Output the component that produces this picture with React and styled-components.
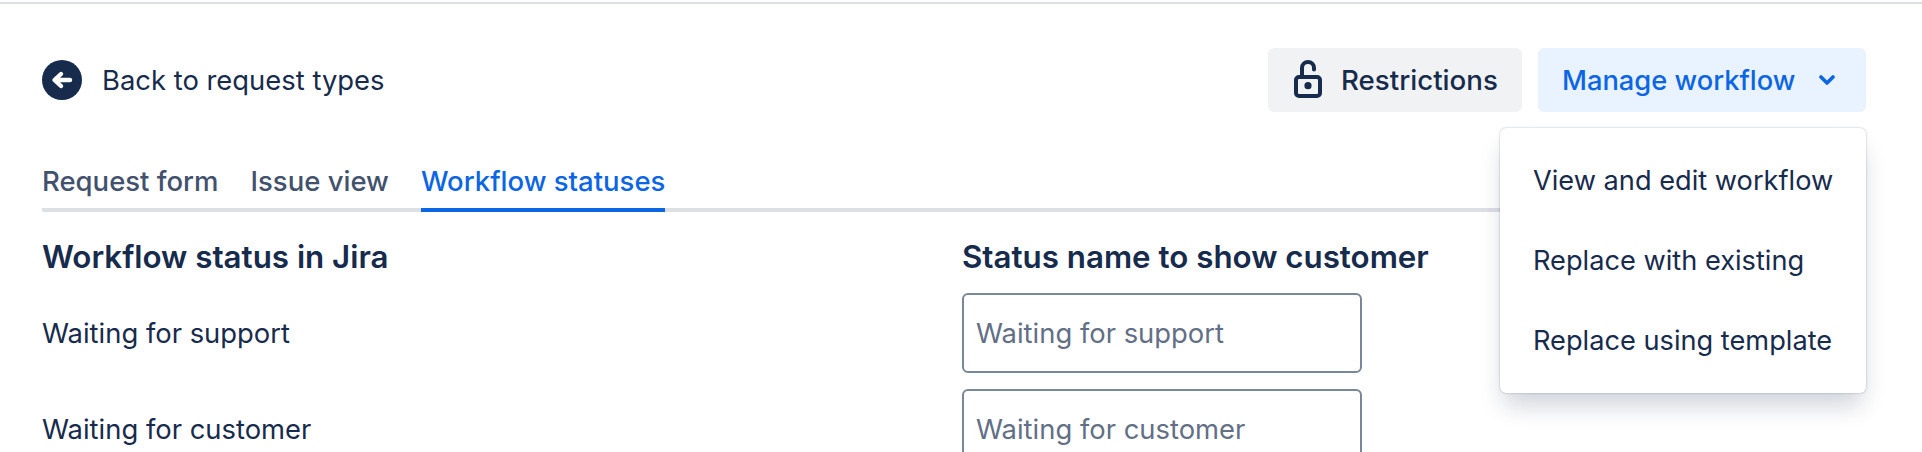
import React from 'react';
import styled, { createGlobalStyle } from 'styled-components';

const GlobalStyle = createGlobalStyle`
  html, body {
    margin: 0;
    background: #fff;
    overflow: hidden;
  }
  body {
    font-family: Inter, "Noto Sans", sans-serif;
    color: #172b4d;
  }
`;

const Page = styled.div`
  position: relative;
  height: 452px;
  padding: 2px 56px 0 42px;
  box-sizing: border-box;
  overflow: hidden;
`;

const TopRule = styled.div`
  height: 2px;
  margin: 0 -56px 0 -42px;
  background: #dcdfe4;
`;

const Header = styled.div`
  display: flex;
  align-items: center;
  justify-content: space-between;
  margin-top: 44px;
  height: 64px;
`;

const BackLink = styled.a`
  display: flex;
  align-items: center;
  gap: 20px;
  font-size: 27.4px;
  color: #172b4d;
`;

const Actions = styled.div`
  display: flex;
  gap: 16px;
`;

const Button = styled.button`
  display: flex;
  align-items: center;
  height: 64px;
  border: 0;
  border-radius: 6px;
  font: 500 ${(p) => p.$size}px Inter, sans-serif;
  background: ${(p) => (p.$primary ? '#e9f2ff' : '#f1f2f4')};
  color: ${(p) => (p.$primary ? '#0c66e4' : '#172b4d')};
  width: ${(p) => p.$width}px;
  padding: 0 0 0 ${(p) => p.$pad}px;
  gap: ${(p) => p.$gap}px;
`;

const Tabs = styled.div`
  display: flex;
  gap: 32px;
  margin-top: 48px;
  border-bottom: 4px solid #dcdfe4;
  border-radius: 2px;
`;

const Tab = styled.div`
  font-size: 27.5px;
  font-weight: 500;
  line-height: 43px;
  padding-bottom: 5px;
  margin-bottom: -4px;
  border-bottom: 4px solid ${(p) => (p.$active ? '#0c66e4' : 'transparent')};
  color: ${(p) => (p.$active ? '#0c66e4' : '#42526e')};
`;

const StatusGrid = styled.div`
  display: grid;
  grid-template-columns: 920px 1fr;
  grid-auto-rows: 80px;
  row-gap: 16px;
  align-items: center;
`;

const HeadCell = styled.div`
  font-size: 31.3px;
  font-weight: 600;
  line-height: 32px;
  margin: 29px 0 -12px;
`;

const StatusHead = styled(StatusGrid)`
  grid-auto-rows: auto;
`;

const StatusBody = styled(StatusGrid)`
  margin-top: 32px;
`;

const StatusCell = styled.div`
  font-size: 27.4px;
`;

const NameInput = styled.input`
  box-sizing: border-box;
  width: 400px;
  height: 80px;
  padding: 0 12px;
  border: 2px solid #7a869a;
  border-radius: 6px;
  font: 27.4px Inter, sans-serif;
  color: #172b4d;
  outline: none;
  &::placeholder {
    color: #626f86;
    opacity: 1;
  }
`;

const Menu = styled.div`
  position: absolute;
  top: 128px;
  left: 1500px;
  width: 366px;
  height: 265px;
  box-sizing: border-box;
  padding: 13px 0 0;
  background: #fff;
  border-radius: 6px;
  box-shadow: 0 16px 24px -4px rgba(9, 30, 66, 0.2), 0 0 2px rgba(9, 30, 66, 0.35);
`;

const MenuItem = styled.div`
  height: 80px;
  line-height: 80px;
  padding-left: 33px;
  font-size: 27.2px;
  white-space: nowrap;
`;

const BackIcon = () => (
  <svg width="40" height="40" viewBox="0 0 40 40">
    <circle cx="20" cy="20" r="20" fill="#172b4d" />
    <path d="M28 20H13M19 14l-6.5 6 6.5 6" fill="none" stroke="#fff" strokeWidth="4.4" strokeLinecap="round" strokeLinejoin="round" />
  </svg>
);

const UnlockIcon = () => (
  <svg width="28" height="40" viewBox="0 0 28 40">
    <path d="M8 17V8a6 6 0 0 1 12 0v1.5" fill="none" stroke="#172b4d" strokeWidth="4" strokeLinecap="round" />
    <rect x="2" y="17" width="24" height="19" rx="3" fill="none" stroke="#172b4d" strokeWidth="4" />
    <circle cx="14" cy="25.7" r="3.6" fill="#172b4d" />
  </svg>
);

const ChevronIcon = () => (
  <svg width="16" height="10" viewBox="0 0 16 10">
    <path d="M2 2l6 6 6-6" fill="none" stroke="#0c66e4" strokeWidth="3.6" strokeLinecap="round" strokeLinejoin="round" />
  </svg>
);

const statuses = ['Waiting for support', 'Waiting for customer'];

const App = () => (
  <Page>
    <GlobalStyle />
    <TopRule />
    <Header>
      <BackLink>
        <BackIcon />
        Back to request types
      </BackLink>
      <Actions>
        <Button $size={27.7} $width={254} $pad={26} $gap={19}>
          <UnlockIcon />
          Restrictions
        </Button>
        <Button $primary $size={27.3} $width={328} $pad={24} $gap={24}>
          Manage workflow
          <ChevronIcon />
        </Button>
      </Actions>
    </Header>
    <Tabs>
      <Tab>Request form</Tab>
      <Tab>Issue view</Tab>
      <Tab $active>Workflow statuses</Tab>
    </Tabs>
    <StatusHead>
      <HeadCell>Workflow status in Jira</HeadCell>
      <HeadCell>Status name to show customer</HeadCell>
    </StatusHead>
    <StatusBody>
      {statuses.map((s) => (
        <React.Fragment key={s}>
          <StatusCell>{s}</StatusCell>
          <NameInput placeholder={s} readOnly />
        </React.Fragment>
      ))}
    </StatusBody>
    <Menu>
      <MenuItem>View and edit workflow</MenuItem>
      <MenuItem>Replace with existing</MenuItem>
      <MenuItem>Replace using template</MenuItem>
    </Menu>
  </Page>
);

export default App;
